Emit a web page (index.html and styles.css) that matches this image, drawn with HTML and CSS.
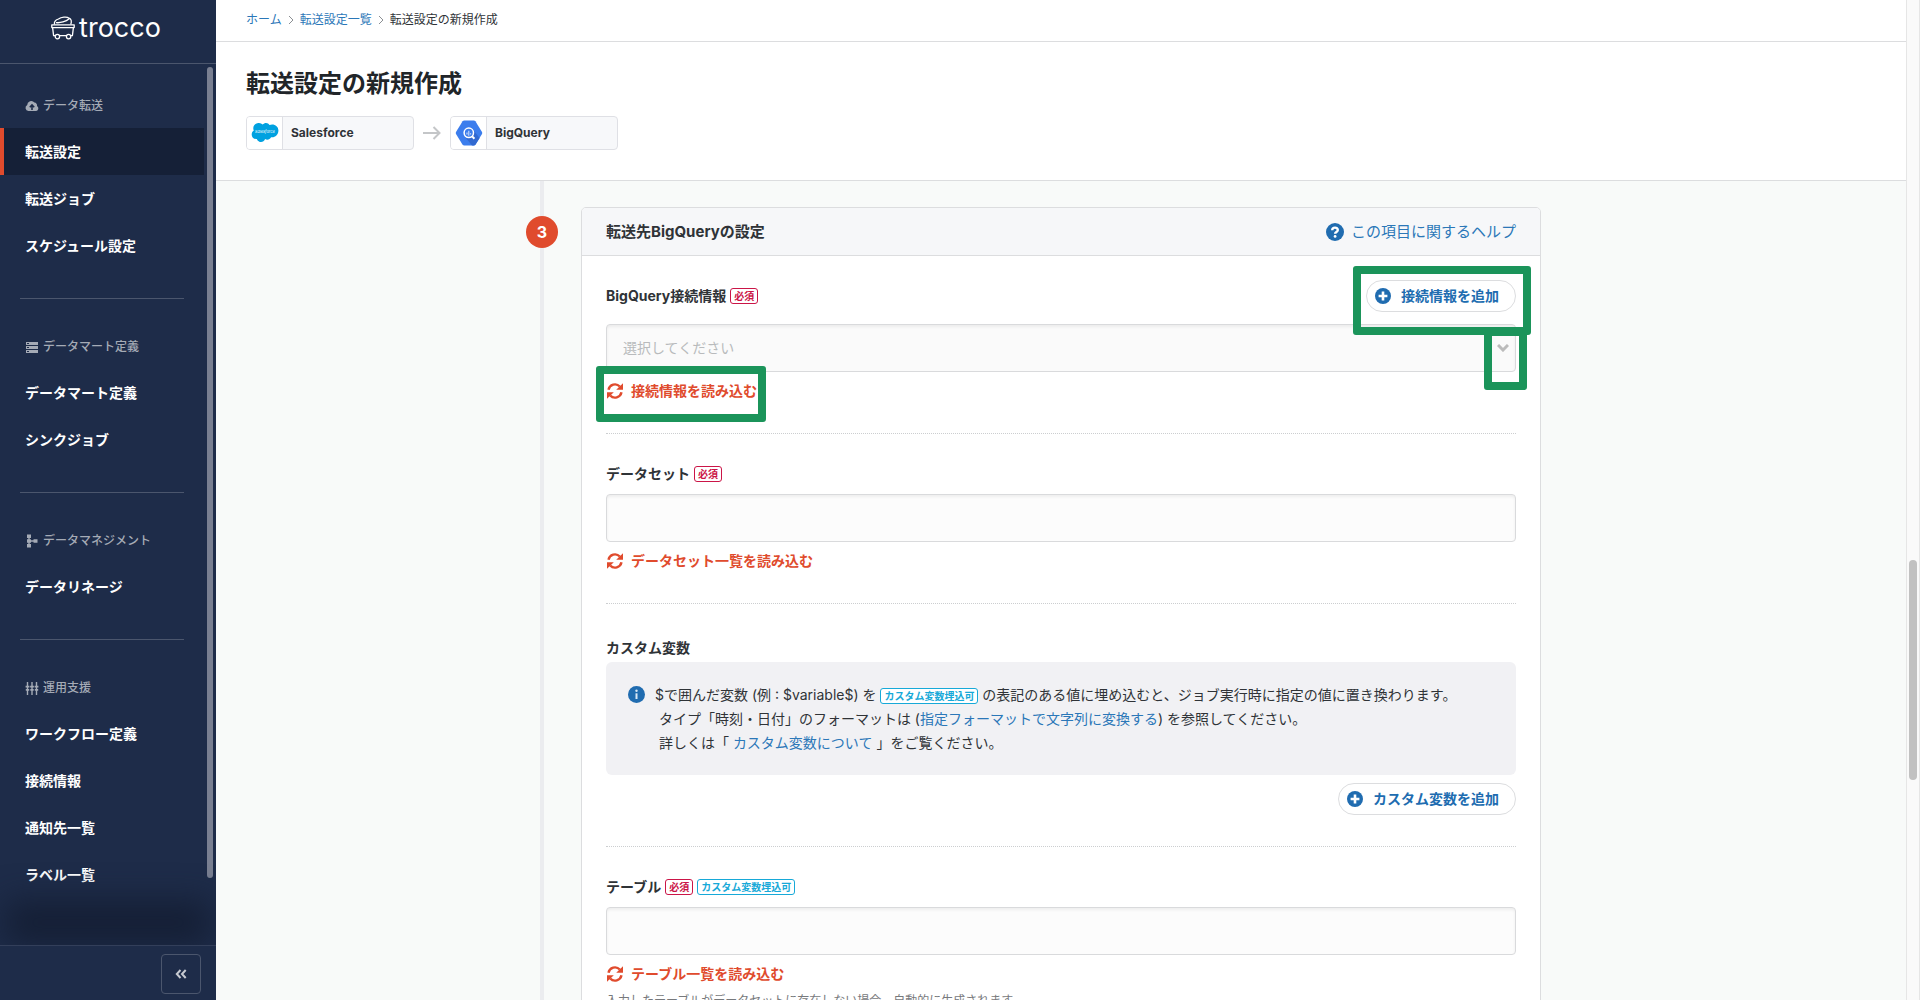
FILE: index.html
```html
<!DOCTYPE html>
<html lang="ja">

<head>
    <meta charset="UTF-8">
    <meta name="viewport" content="width=device-width, initial-scale=1.0">
    <title>転送設定の新規作成 | trocco</title>
    <link rel="stylesheet" href="styles.css">
</head>

<body>

    <!-- shared icons -->
    <svg class="icon-defs" width="0" height="0" aria-hidden="true">
        <symbol id="icon-reload" viewBox="0 0 16 16">
            <path d="M1.5 6.7A6.6 6.6 0 0 1 12.8 3.5" fill="none" stroke="currentColor" stroke-width="2.4" />
            <path d="M16 0.2V6.8H9.2Z" fill="currentColor" />
            <path d="M14.5 9.3A6.6 6.6 0 0 1 3.2 12.5" fill="none" stroke="currentColor" stroke-width="2.4" />
            <path d="M0 15.8V9.2H6.8Z" fill="currentColor" />
        </symbol>
        <symbol id="icon-plus" viewBox="0 0 16 16">
            <circle cx="8" cy="8" r="8" fill="currentColor" />
            <path d="M8 3.6V12.4M3.6 8H12.4" stroke="#fff" stroke-width="2.6" />
        </symbol>
    </svg>

    <div class="app">
        <aside class="sidebar">
            <div class="logo">
                <svg width="24" height="24" viewBox="0 0 24 24" fill="none" stroke="#fff" stroke-width="1.3" stroke-linejoin="round">
                    <path d="M3.5 8.5C2.8 5.5 4.5 4 7.5 3C10 1 16 0.2 18 2.2C20.4 3 20.8 5.5 19.8 8.5" />
                    <path d="M5 6.6C9 7.2 15 5.6 18.2 2.8" />
                    <path d="M0.8 8.8H23.2V11.6H0.8Z" />
                    <path d="M1.6 11.6L2.6 19.6H4.2M22.4 11.6L21.4 19.6H19.8M8.6 19.6H15.4" />
                    <circle cx="6.4" cy="20.6" r="2.2" />
                    <circle cx="17.6" cy="20.6" r="2.2" />
                </svg>
                <span>trocco</span>
            </div>

            <nav class="side-nav">
                <section class="nav-group">
                    <h2 class="nav-title">
                        <svg width="14" height="14" viewBox="0 0 14 14">
                            <path fill="currentColor" d="M3.4 12A3.2 3.2 0 0 1 2.2 6A4 4 0 0 1 9.4 3.6A2.8 2.8 0 0 1 12 7A2.7 2.7 0 0 1 11.2 12Z" />
                            <path d="M7 11V7M4.8 8.2L7 6L9.2 8.2" fill="none" stroke="#1e2c49" stroke-width="1.6" />
                        </svg>
                        データ転送
                    </h2>
                    <a class="nav-item active" href="#">転送設定</a>
                    <a class="nav-item" href="#">転送ジョブ</a>
                    <a class="nav-item" href="#">スケジュール設定</a>
                </section>
                <section class="nav-group">
                    <h2 class="nav-title">
                        <svg width="14" height="14" viewBox="0 0 14 14">
                            <path fill="currentColor" d="M1 2H13V5H1ZM1 6H13V9H1ZM1 10H13V13H1Z" />
                            <path d="M2 3.5H4M2 7.5H4M2 11.5H4" stroke="#1e2c49" stroke-width="1" />
                        </svg>
                        データマート定義
                    </h2>
                    <a class="nav-item" href="#">データマート定義</a>
                    <a class="nav-item" href="#">シンクジョブ</a>
                </section>
                <section class="nav-group">
                    <h2 class="nav-title">
                        <svg width="14" height="14" viewBox="0 0 14 14">
                            <path fill="currentColor" d="M2 0.5H6V4H2ZM2 5.2H6V8.8H2ZM2 10H6V13.5H2ZM8.5 5.2H12.5V8.8H8.5Z" />
                            <path d="M4 2V12M4 7H10" stroke="currentColor" stroke-width="1.4" />
                        </svg>
                        データマネジメント
                    </h2>
                    <a class="nav-item" href="#">データリネージ</a>
                </section>
                <section class="nav-group">
                    <h2 class="nav-title">
                        <svg width="14" height="14" viewBox="0 0 14 14">
                            <path d="M2.5 1V14M7 1V14M11.5 1V14" stroke="currentColor" stroke-width="1.4" />
                            <path d="M0.6 5.6H4.4M5.1 5.6H8.9M9.6 5.6H13.4M0.8 8.8H4.2M5.3 8.8H8.7M9.8 8.8H13.2" stroke="currentColor" stroke-width="1.8" />
                        </svg>
                        運用支援
                    </h2>
                    <a class="nav-item" href="#">ワークフロー定義</a>
                    <a class="nav-item" href="#">接続情報</a>
                    <a class="nav-item" href="#">通知先一覧</a>
                    <a class="nav-item" href="#">ラベル一覧</a>
                </section>
                <div class="nav-scroll"></div>
            </nav>

            <div class="side-footer">
                <button type="button" class="collapse" aria-label="メニューを閉じる">
                    <svg width="12" height="10" viewBox="0 0 12 10" fill="none" stroke="currentColor" stroke-width="2">
                        <path d="M5.5 1L1.8 5L5.5 9M10.7 1L7 5L10.7 9" />
                    </svg>
                </button>
            </div>
        </aside>

        <main class="main">
            <nav class="breadcrumb">
                <a href="#">ホーム</a>
                <svg width="6" height="10" viewBox="0 0 6 10"><path d="M1 1L5 5L1 9" /></svg>
                <a href="#">転送設定一覧</a>
                <svg width="6" height="10" viewBox="0 0 6 10"><path d="M1 1L5 5L1 9" /></svg>
                <span>転送設定の新規作成</span>
            </nav>

            <header class="page-header">
                <h1>転送設定の新規作成</h1>
                <div class="flow">
                    <div class="service">
                        <div class="service-icon">
                            <svg width="28" height="22" viewBox="0 0 28 22">
                                <path fill="#00a1e0" d="M11.6 2.6C13.7 0.2 17.3 0.6 18.5 3.1C22.9 1.3 27.6 4.3 27.4 8.8C27.2 13.3 23.6 15.9 20.1 15.2C18.9 17.6 16.2 18.2 14.1 17.1C12.8 20.7 7.7 21.3 5.8 16.9C2.6 17.3 0.6 15 0.7 12.5C0.7 10.7 1.6 9.3 2.8 8.6C0.9 4.2 4.5 0.8 8 1.1C9.5 1.2 10.7 1.8 11.6 2.6Z" />
                                <text class="sf-text" x="14" y="11" text-anchor="middle">salesforce</text>
                            </svg>
                        </div>
                        <span>Salesforce</span>
                    </div>
                    <svg width="18" height="14" viewBox="0 0 18 14" fill="none" stroke="#c4c6c8" stroke-width="2">
                        <path d="M0 7H16M10.5 1L16.5 7L10.5 13" />
                    </svg>
                    <div class="service">
                        <div class="service-icon">
                            <svg width="28" height="26" viewBox="0 0 28 26">
                                <path fill="#3b7ded" d="M7.6 1.2Q8.2 0.4 9.2 0.4H18.8Q19.8 0.4 20.4 1.2L27 12Q27.5 13 27 14L20.4 24.8Q19.8 25.6 18.8 25.6H9.2Q8.2 25.6 7.6 24.8L1 14Q0.5 13 1 12Z" />
                                <path fill="#3169d0" d="M17.5 9L24.6 17.9L20.4 24.8Q19.8 25.6 18.8 25.6H17L10.5 17.5Z" />
                                <circle cx="13.8" cy="12.8" r="4.7" fill="#3b7ded" stroke="#fff" stroke-width="1.5" />
                                <path d="M17.2 16.4L19.4 18.8" stroke="#fff" stroke-width="2" />
                                <path d="M12 12.6V14.6M13.8 10.8V15.8M15.6 13.2V14.6" stroke="#cfe0fb" stroke-width="1.1" />
                            </svg>
                        </div>
                        <span>BigQuery</span>
                    </div>
                </div>
            </header>

            <div class="steps">
                <div class="rail">
                    <div class="step-number">3</div>
                </div>

                <form class="card">
                    <div class="card-header">
                        <h2>転送先BigQueryの設定</h2>
                        <a class="help" href="#">
                            <svg width="18" height="18" viewBox="0 0 18 18">
                                <circle cx="9" cy="9" r="9" fill="#206cb0" />
                                <path d="M6.2 7.2C6.3 3.8 11.8 3.9 11.8 7C11.8 8.9 9.1 8.9 9.1 10.8" fill="none" stroke="#fff" stroke-width="2.4" />
                                <circle cx="9.1" cy="13.4" r="1.4" fill="#fff" />
                            </svg>
                            この項目に関するヘルプ
                        </a>
                    </div>

                    <div class="card-body">
                        <div class="field">
                            <div class="field-top">
                                <div class="field-label">
                                    <label for="connection">BigQuery接続情報</label>
                                    <span class="tag required">必須</span>
                                </div>
                                <div class="marked">
                                    <button type="button" class="add-button">
                                        <svg width="16" height="16"><use href="#icon-plus" /></svg>
                                        接続情報を追加
                                    </button>
                                    <div class="highlight highlight-add"></div>
                                </div>
                            </div>
                            <div class="select-box">
                                <select id="connection">
                                    <option>選択してください</option>
                                </select>
                                <svg class="arrow" width="12" height="8" viewBox="0 0 12 8"><path d="M1 1L6 6L11 1" /></svg>
                                <div class="highlight highlight-arrow"></div>
                            </div>
                            <div class="marked">
                                <button type="button" class="reload">
                                    <svg width="16" height="16"><use href="#icon-reload" /></svg>
                                    接続情報を読み込む
                                </button>
                                <div class="highlight highlight-reload"></div>
                            </div>
                        </div>

                        <div class="field">
                            <div class="field-label">
                                <label for="dataset">データセット</label>
                                <span class="tag required">必須</span>
                            </div>
                            <input type="text" id="dataset">
                            <button type="button" class="reload">
                                <svg width="16" height="16"><use href="#icon-reload" /></svg>
                                データセット一覧を読み込む
                            </button>
                        </div>

                        <div class="field variables">
                            <h3 class="field-label">カスタム変数</h3>
                            <div class="info">
                                <svg width="17" height="17" viewBox="0 0 17 17">
                                    <circle cx="8.5" cy="8.5" r="8.5" fill="#206cb0" />
                                    <path d="M8.5 7.3V13" stroke="#d8e8f6" stroke-width="2" />
                                    <circle cx="8.5" cy="4.8" r="1.2" fill="#d8e8f6" />
                                </svg>
                                <p>
                                    $で囲んだ変数 (例 : $variable$) を <span class="tag variable">カスタム変数埋込可</span> の表記のある値に埋め込むと、ジョブ実行時に指定の値に置き換わります。<br>
                                    &nbsp;タイプ「時刻・日付」のフォーマットは (<a href="#">指定フォーマットで文字列に変換する</a>) を参照してください。<br>
                                    &nbsp;詳しくは「 <a href="#">カスタム変数について</a> 」をご覧ください。
                                </p>
                            </div>
                            <button type="button" class="add-button">
                                <svg width="16" height="16"><use href="#icon-plus" /></svg>
                                カスタム変数を追加
                            </button>
                        </div>

                        <div class="field">
                            <div class="field-label">
                                <label for="table">テーブル</label>
                                <span class="tag required">必須</span>
                                <span class="tag variable">カスタム変数埋込可</span>
                            </div>
                            <input type="text" id="table">
                            <button type="button" class="reload">
                                <svg width="16" height="16"><use href="#icon-reload" /></svg>
                                テーブル一覧を読み込む
                            </button>
                            <p class="note">入力したテーブルがデータセットに存在しない場合、自動的に生成されます。</p>
                        </div>
                    </div>
                </form>
            </div>
        </main>

        <div class="page-scroll">
            <div class="page-thumb"></div>
        </div>
    </div>

</body>

</html>
```

FILE: styles.css
```css
* {
    box-sizing: border-box;
}

body {
    font-family: Inter, "Noto Sans CJK JP", sans-serif;
    font-size: 14px;
    line-height: 20px;
    color: #2f3337;
    margin: 0;
}

h1, h2, h3, p {
    margin: 0;
}

a {
    color: #2b77b8;
    text-decoration: none;
}

button, input, select {
    font: inherit;
}

button {
    cursor: pointer;
}

svg {
    flex: none;
}

.icon-defs {
    position: absolute;
}

.app {
    display: flex;
    height: 100vh;
    overflow: hidden;
}

/* sidebar */
.sidebar {
    display: flex;
    flex-direction: column;
    flex: none;
    width: 216px;
    overflow: hidden;
    background-color: #1e2c49;
    color: #fff;
}

.logo {
    display: flex;
    flex: none;
    justify-content: center;
    align-items: center;
    gap: 4px;
    height: 64px;
    padding: 0 4px 8px 0;
    border-bottom: 1px solid #4b566d;
    font-size: 27px;
}

.side-nav {
    position: relative;
    flex: 1;
    min-height: 0;
    padding-top: 17px;
    overflow: hidden;
}

.nav-group + .nav-group {
    margin-top: 29px;
}

.nav-group + .nav-group::before {
    content: "";
    display: block;
    height: 1px;
    margin: 0 32px 23px 20px;
    background-color: #4b566d;
}

.nav-title {
    display: flex;
    align-items: center;
    gap: 4px;
    height: 47px;
    padding: 2px 0 0 25px;
    font-size: 12px;
    font-weight: 500;
    color: #a5abb6;
}

.nav-item {
    display: flex;
    align-items: center;
    height: 47px;
    margin-right: 12px;
    padding-left: 25px;
    font-weight: 700;
    color: #fff;
}

.nav-item.active {
    padding-left: 21px;
    border-left: 4px solid #e04b2d;
    background-color: #152037;
}

.nav-scroll {
    position: absolute;
    top: 3px;
    right: 3px;
    width: 6px;
    height: 92%;
    border-radius: 3px;
    background-color: #797f91;
}

.side-footer {
    position: relative;
    display: flex;
    justify-content: flex-end;
    padding: 8px 15px 6px;
    border-top: 1px solid #333f5a;
    background-color: #1e2c49;
    box-shadow: 0 -50px 32px -6px #151f35;
}

.collapse {
    display: flex;
    align-items: center;
    justify-content: center;
    width: 40px;
    height: 40px;
    border: 1px solid #4b566d;
    border-radius: 4px;
    background: none;
    color: #c7cad1;
}

/* page */
.main {
    flex: 1;
    min-width: 0;
    overflow: hidden;
    background-color: #f8faf9;
}

.breadcrumb {
    display: flex;
    align-items: center;
    gap: 6px;
    height: 42px;
    padding: 0 30px 2px;
    border-bottom: 1px solid #dcdddf;
    background-color: #fff;
    font-size: 12px;
}

.breadcrumb svg {
    fill: none;
    stroke: #8b8f93;
}

.page-header {
    padding: 26px 30px 30px;
    border-bottom: 1px solid #dcdddf;
    background-color: #fff;
}

.page-header h1 {
    margin-bottom: 16px;
    font-size: 24px;
    line-height: 32px;
    color: #212529;
}

.flow {
    display: flex;
    align-items: center;
    gap: 9px;
}

.service {
    display: flex;
    align-items: center;
    width: 168px;
    height: 34px;
    border: 1px solid #dfe0e5;
    border-radius: 4px;
    background-color: #f7f8fa;
    font-size: 12px;
    font-weight: 700;
    overflow: hidden;
}

.service-icon {
    display: flex;
    align-items: center;
    justify-content: center;
    width: 36px;
    height: 32px;
    margin-right: 8px;
    border-right: 1px solid #dfe0e5;
    background-color: #fff;
}

.sf-text {
    font-size: 4px;
    font-style: italic;
    font-weight: 400;
    fill: #fff;
}

.steps {
    display: grid;
    grid-template-columns: minmax(55px, 1fr) minmax(0, 960px) minmax(0, 1fr);
}

.rail {
    justify-self: end;
    width: 32px;
    margin-right: 23px;
    padding-top: 35px;
    background: linear-gradient(#ebecef, #ebecef) center / 4px 100% no-repeat;
}

.step-number {
    height: 32px;
    border-radius: 50%;
    background-color: #e04b2d;
    color: #fff;
    font-size: 16px;
    font-weight: 700;
    line-height: 32px;
    text-align: center;
}

/* card */
.card {
    margin-top: 26px;
    border: 1px solid #dcdddf;
    border-radius: 5px;
    background-color: #fff;
}

.card-header {
    display: flex;
    align-items: center;
    justify-content: space-between;
    height: 48px;
    padding: 0 24px;
    border-bottom: 1px solid #dcdddf;
    border-radius: 4px 4px 0 0;
    background-color: #f6f7f9;
    font-size: 15px;
}

.card-header h2 {
    font-size: 15px;
    font-weight: 700;
}

.help {
    display: flex;
    align-items: center;
    gap: 7px;
}

.card-body {
    padding: 24px;
}

.field {
    display: flex;
    flex-direction: column;
    align-items: flex-start;
}

.field + .field {
    margin-top: 31px;
    padding-top: 30px;
    border-top: 1px dotted #ccced0;
}

.field-top {
    display: flex;
    align-items: center;
    justify-content: space-between;
    align-self: stretch;
    margin-bottom: 12px;
}

.field-label {
    display: flex;
    align-items: center;
    gap: 4px;
    font-size: 14px;
    font-weight: 700;
}

.tag {
    display: inline-block;
    padding: 0 3px;
    border: 1px solid;
    border-radius: 3px;
    background-color: #fff;
    font-size: 10px;
    font-weight: 700;
    line-height: 14px;
}

.required {
    color: #cb1547;
}

.variable {
    color: #17a9d8;
}

.field input,
.field select {
    display: block;
    width: 100%;
    height: 48px;
    padding: 0 16px;
    border: 1px solid #d9dadc;
    border-radius: 4px;
    background-color: #fcfcfc;
    box-shadow: inset 0 2px 3px rgba(0, 0, 0, 0.06);
}

.field select {
    appearance: none;
    background-color: #fafafa;
    color: #b8babc;
}

.field input {
    margin-top: 10px;
}

.select-box {
    position: relative;
    align-self: stretch;
}

.arrow {
    position: absolute;
    top: 20px;
    right: 7px;
    fill: none;
    stroke: #bbb;
    stroke-width: 3;
    pointer-events: none;
}

.add-button {
    display: flex;
    align-items: center;
    gap: 10px;
    height: 32px;
    padding: 0 16px 0 8px;
    border: 1px solid #dcdddf;
    border-radius: 16px;
    background-color: #fff;
    color: #206cb0;
    font-weight: 700;
}

.reload {
    display: flex;
    align-items: center;
    gap: 8px;
    height: 22px;
    margin-top: 8px;
    padding: 0 0 0 1px;
    border: none;
    background: none;
    color: #e04b2d;
    font-weight: 700;
}

.field.variables {
    padding-top: 34px;
}

.info {
    display: flex;
    align-self: stretch;
    gap: 10px;
    margin: 4px 0 8px;
    padding: 21px 22px 20px;
    border-radius: 6px;
    background-color: #f1f1f4;
    line-height: 24px;
}

.info svg {
    margin-top: 3px;
}

.variables .add-button {
    align-self: flex-end;
}

.note {
    margin-top: 6px;
    font-size: 12px;
    color: #77797c;
}

/* green guide frames */
.marked {
    position: relative;
}

.highlight {
    position: absolute;
    border: 8px solid #1b945a;
    border-radius: 3px;
    pointer-events: none;
}

.highlight-add {
    z-index: 1;
    inset: -14px -15px -23px -13px;
}

.highlight-arrow {
    inset: 4px -11px -18px auto;
    width: 43px;
}

.highlight-reload {
    inset: -6px -9px -20px -10px;
}

/* page scrollbar */
.page-scroll {
    flex: none;
    width: 14px;
    border: solid #e6e6e6;
    border-width: 0 1px;
    background-color: #fafafa;
}

.page-thumb {
    width: 8px;
    height: 22vh;
    margin: 56vh auto 0;
    border-radius: 4px;
    background-color: #c1c1c1;
}
```
